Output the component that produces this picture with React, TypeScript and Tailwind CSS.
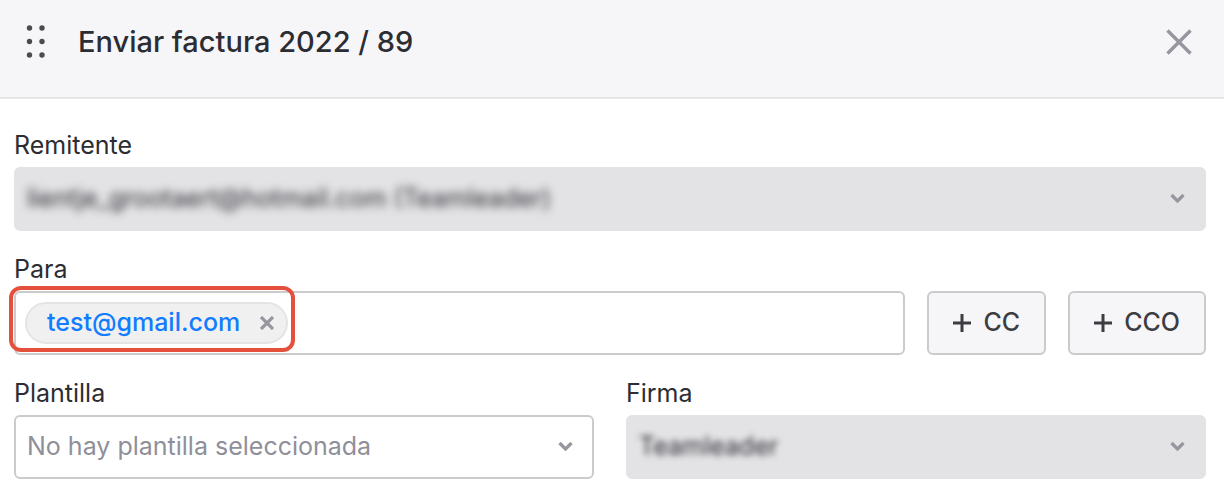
import { useState } from 'react';

interface SelectFieldProps {
  id: string;
  label: string;
  options: string[];
  locked?: boolean;
  textClass: string;
}

function SelectField({ id, label, options, locked, textClass }: SelectFieldProps) {
  return (
    <div className="flex flex-col gap-1.5">
      <label htmlFor={id} className="text-[25px] leading-8">
        {label}
      </label>
      <div
        className={`relative h-16 rounded-md border-2 ${
          locked ? 'border-[#e3e3e5] bg-[#e3e3e5]' : 'border-[#cbcbcd] bg-white'
        }`}
      >
        <select
          id={id}
          className={`h-full w-full appearance-none bg-transparent pr-16 pl-[11px] text-[25px] outline-none ${textClass}`}
        >
          {options.map((option) => (
            <option key={option}>{option}</option>
          ))}
        </select>
        <svg
          viewBox="0 0 16 12"
          className="pointer-events-none absolute top-6 right-[18px] h-3 w-4"
          fill="none"
          stroke="#96969f"
          strokeWidth="3.2"
          aria-hidden="true"
        >
          <path d="M1.5 2 7.5 8 13.5 2" />
        </svg>
      </div>
    </div>
  );
}

function AddButton({ label }: { label: string }) {
  return (
    <button
      type="button"
      className="flex h-16 shrink-0 items-center gap-3 rounded-md border-2 border-[#cbcbcd] bg-[#f6f6f9] px-6 text-[25px] font-medium text-[#3c3c43]"
    >
      <svg viewBox="0 0 18 18" className="size-[18px]" fill="none" stroke="currentColor" strokeWidth="3" aria-hidden="true">
        <path d="M9 0V18M0 9H18" />
      </svg>
      {label}
    </button>
  );
}

export default function App() {
  const [recipients, setRecipients] = useState(['test@gmail.com']);

  const removeRecipient = (email: string) => {
    setRecipients(recipients.filter((r) => r !== email));
  };

  return (
    <div className="min-h-screen bg-white font-['Inter',sans-serif] text-[#2c2d33]">
      <header className="flex items-start border-b-2 border-[#e6e6e9] bg-[#f6f6f9] pt-6 pr-8 pb-[37px] pl-[26px]">
        <button type="button" aria-label="Mover" className="flex h-9 cursor-move items-center">
          <svg viewBox="0 0 20 34" className="h-[34px] w-5" fill="#4b4b52" aria-hidden="true">
            <circle cx="3.5" cy="3" r="2.7" />
            <circle cx="16" cy="3" r="2.7" />
            <circle cx="3.5" cy="16.5" r="2.7" />
            <circle cx="16" cy="16.5" r="2.7" />
            <circle cx="3.5" cy="30" r="2.7" />
            <circle cx="16" cy="30" r="2.7" />
          </svg>
        </button>
        <h1 className="ml-8 flex-1 text-[29px] leading-9 font-medium">Enviar factura 2022 / 89</h1>
        <button type="button" aria-label="Cerrar" className="flex h-9 items-center">
          <svg viewBox="0 0 26 26" className="size-[26px]" fill="none" stroke="#96969f" strokeWidth="3.4" aria-hidden="true">
            <path d="M1.5 1.5 24.5 24.5M24.5 1.5 1.5 24.5" />
          </svg>
        </button>
      </header>

      <form className="flex flex-col gap-[22px] pt-[30px] pr-[18px] pb-4 pl-3.5">
        <SelectField
          id="sender"
          label="Remitente"
          options={['lientje_grootaert@hotmail.com (Teamleader)']}
          locked
          textClass="blur-[4px]"
        />

        <div className="flex flex-col gap-1.5">
          <label htmlFor="to" className="text-[25px] leading-8">
            Para
          </label>
          <div className="flex gap-[22px]">
            <div className="flex h-16 min-w-0 flex-1 items-center gap-2 rounded-md border-2 border-[#cbcbcd] bg-white px-[9px]">
              {recipients.map((email) => (
                <span
                  key={email}
                  className="relative flex h-[42px] shrink-0 items-center gap-5 rounded-full border-2 border-[#e4e4e4] bg-[#f0f0f0] pr-3 pl-5 text-[25px] font-medium text-[#117cff]"
                >
                  {email}
                  <button type="button" aria-label={`Quitar ${email}`} onClick={() => removeRecipient(email)}>
                    <svg viewBox="0 0 14 14" className="size-3.5" fill="none" stroke="#96969f" strokeWidth="3.2" aria-hidden="true">
                      <path d="M1 1 13 13M13 1 1 13" />
                    </svg>
                  </button>
                  <span className="pointer-events-none absolute -top-[18px] -right-[9px] -bottom-2.5 -left-[18px] rounded-xl border-4 border-[#e4503c]" />
                </span>
              ))}
              <input id="to" type="text" className="h-full min-w-0 flex-1 text-[25px] outline-none" />
            </div>
            <AddButton label="CC" />
            <AddButton label="CCO" />
          </div>
        </div>

        <div className="grid grid-cols-2 gap-8">
          <SelectField
            id="template"
            label="Plantilla"
            options={['No hay plantilla seleccionada']}
            textClass="text-[#8f8f99]"
          />
          <SelectField id="signature" label="Firma" options={['Teamleader']} locked textClass="blur-[3px]" />
        </div>
      </form>
    </div>
  );
}
